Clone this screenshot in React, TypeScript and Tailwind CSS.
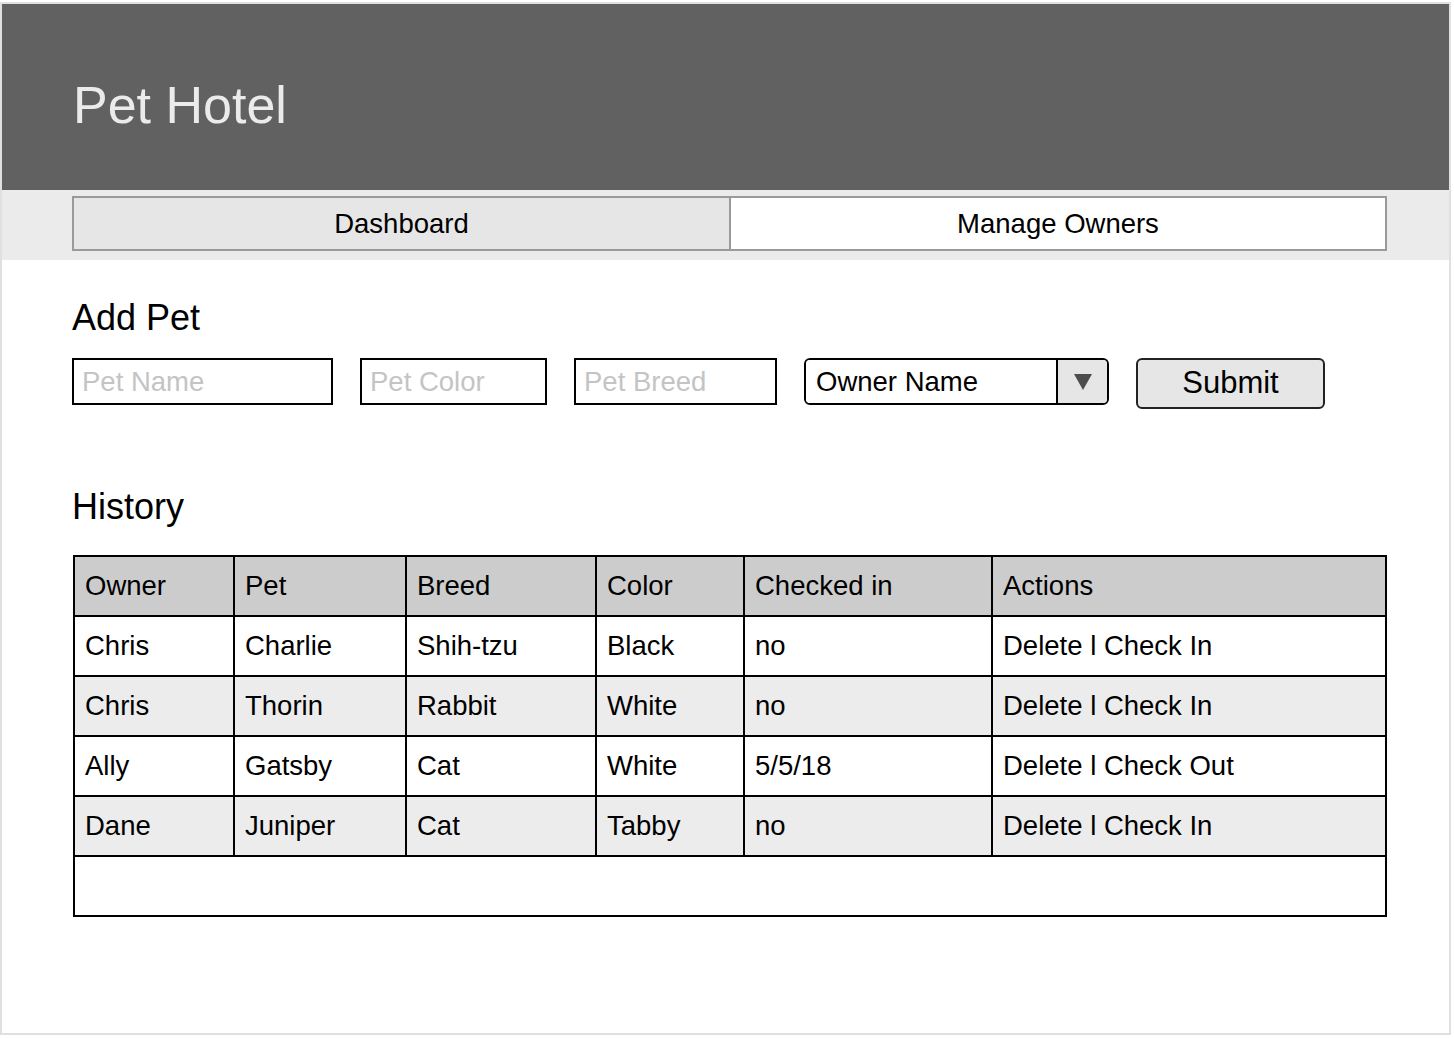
import React from 'react';

const rows = [
  { owner: 'Chris', pet: 'Charlie', breed: 'Shih-tzu', color: 'Black', checked: 'no', action: 'Delete l Check In' },
  { owner: 'Chris', pet: 'Thorin', breed: 'Rabbit', color: 'White', checked: 'no', action: 'Delete l Check In' },
  { owner: 'Ally', pet: 'Gatsby', breed: 'Cat', color: 'White', checked: '5/5/18', action: 'Delete l Check Out' },
  { owner: 'Dane', pet: 'Juniper', breed: 'Cat', color: 'Tabby', checked: 'no', action: 'Delete l Check In' },
];

const headers = ['Owner', 'Pet', 'Breed', 'Color', 'Checked in', 'Actions'];

const App: React.FC = () => {
  return (
    <div className="pt-[2px] bg-white" style={{ fontFamily: '"Liberation Sans", Arial, sans-serif' }}>
      <div className="w-[1451px] h-[1033px] border-2 border-[#e0e0e0] bg-white flex flex-col">
        {/* Header */}
        <header className="h-[186px] bg-[#616161] pl-[71px] pt-[75px] shrink-0">
          <h1 className="text-[52px] leading-none text-[#ebebeb]">Pet Hotel</h1>
        </header>

        {/* Tabs */}
        <nav className="h-[70px] bg-[#ebebeb] pl-[70px] pt-[6px] shrink-0">
          <div className="flex w-[1315px] h-[55px] border-2 border-[#9a9a9a] text-[27.5px] text-black">
            <button className="w-[657px] bg-[#e6e6e6] border-r-2 border-[#9a9a9a] flex items-center justify-center">
              Dashboard
            </button>
            <button className="flex-1 bg-white flex items-center justify-center">Manage Owners</button>
          </div>
        </nav>

        <main className="pl-[70px]">
          {/* Add Pet */}
          <h2 className="mt-[40px] text-[36px] leading-none text-black">Add Pet</h2>
          <div className="mt-[22px] flex items-start gap-[27px]">
            <input
              placeholder="Pet Name"
              className="w-[261px] h-[47px] border-2 border-black px-[8px] text-[27.5px] placeholder:text-[#c4c4c4] outline-none"
            />
            <input
              placeholder="Pet Color"
              className="w-[187px] h-[47px] border-2 border-black px-[8px] text-[27.5px] placeholder:text-[#c4c4c4] outline-none"
            />
            <input
              placeholder="Pet Breed"
              className="w-[203px] h-[47px] border-2 border-black px-[8px] text-[27.5px] placeholder:text-[#c4c4c4] outline-none"
            />
            <div className="w-[305px] h-[47px] border-2 border-black rounded-[6px] flex overflow-hidden">
              <div className="flex-1 flex items-center pl-[10px] text-[27.5px] text-black bg-white">Owner Name</div>
              <div className="w-[51px] border-l-2 border-black bg-[#e6e6e6] flex items-center justify-center">
                <svg width="18" height="16" viewBox="0 0 18 16">
                  <polygon points="0,0 18,0 9,16" fill="#4d4d4d" />
                </svg>
              </div>
            </div>
            <button className="w-[189px] h-[51px] border-2 border-[#222] rounded-[6px] bg-[#e6e6e6] text-[31px] text-black flex items-center justify-center">
              Submit
            </button>
          </div>

          {/* History */}
          <h2 className="mt-[80px] text-[36px] leading-none text-black">History</h2>
          <table className="mt-[30px] ml-[1px] w-[1314px] table-fixed border-collapse border-2 border-black text-[27.5px] text-black">
            <colgroup>
              <col className="w-[160px]" />
              <col className="w-[172px]" />
              <col className="w-[190px]" />
              <col className="w-[148px]" />
              <col className="w-[248px]" />
              <col />
            </colgroup>
            <thead>
              <tr className="bg-[#cccccc] h-[60px]">
                {headers.map((h) => (
                  <th key={h} className="border-2 border-black px-[10px] text-left font-normal">
                    {h}
                  </th>
                ))}
              </tr>
            </thead>
            <tbody>
              {rows.map((r, i) => (
                <tr key={i} className={`h-[60px] ${i % 2 === 1 ? 'bg-[#ececec]' : 'bg-white'}`}>
                  <td className="border-2 border-black px-[10px]">{r.owner}</td>
                  <td className="border-2 border-black px-[10px]">{r.pet}</td>
                  <td className="border-2 border-black px-[10px]">{r.breed}</td>
                  <td className="border-2 border-black px-[10px]">{r.color}</td>
                  <td className="border-2 border-black px-[10px]">{r.checked}</td>
                  <td className="border-2 border-black px-[10px]">{r.action}</td>
                </tr>
              ))}
              <tr className="h-[60px] bg-white">
                <td colSpan={6} className="border-2 border-black" />
              </tr>
            </tbody>
          </table>
        </main>
      </div>
    </div>
  );
};

export default App;
